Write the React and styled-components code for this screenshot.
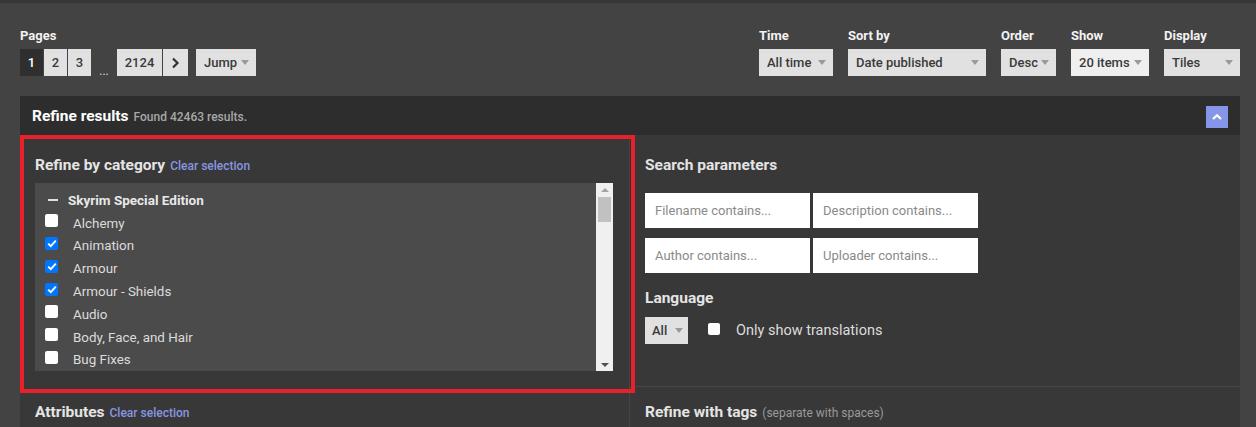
import React from "react";
import styled, { createGlobalStyle } from "styled-components";

const GlobalStyle = createGlobalStyle`
  html, body {
    margin: 0;
    padding: 0;
    background: #434343;
    font-family: Roboto, "Liberation Sans", Arial, sans-serif;
    overflow: hidden;
  }
  * { box-sizing: border-box; }
`;

const Page = styled.div`
  width: 1256px;
  height: 427px;
  background: #434343;
  border-top: 3px solid #363636;
  padding: 0 16px 0 20px;
`;

const Toolbar = styled.div`
  display: flex;
  justify-content: space-between;
  align-items: flex-end;
  height: 73px;
`;

const Group = styled.div`
  display: flex;
  flex-direction: column;
  gap: 5px;
`;

const Label = styled.div`
  color: #f2f2f2;
  font-size: 13px;
  font-weight: 700;
  height: 16px;
  line-height: 16px;
`;

const Row = styled.div`
  display: flex;
  align-items: flex-end;
`;

const PageBtn = styled.div`
  width: ${(p) => p.w}px;
  height: 27px;
  margin-right: ${(p) => p.mr ?? 1}px;
  background: ${(p) => (p.active ? "#2f2f2f" : "#e1e1e1")};
  color: ${(p) => (p.active ? "#fff" : "#3a3a3a")};
  font-size: 13px;
  font-weight: 500;
  display: flex;
  align-items: center;
  justify-content: center;
`;

const Dots = styled.div`
  width: 26px;
  text-align: center;
  color: #ddd;
  font-size: 12px;
  line-height: 10px;
`;

const RightTools = styled.div`
  display: flex;
  gap: 15px;
`;

const Select = styled.div`
  width: ${(p) => p.w}px;
  height: 27px;
  background: ${(p) => (p.light ? "#efefef" : "#e1e1e1")};
  color: #3a3a3a;
  font-size: 13px;
  font-weight: 500;
  display: flex;
  align-items: center;
  justify-content: space-between;
  padding: 0 7px 0 8px;
`;

const Caret = styled.span`
  width: 0;
  height: 0;
  border-left: 4px solid transparent;
  border-right: 4px solid transparent;
  border-top: 5px solid #9a9a9a;
`;

const Panel = styled.div`
  margin-top: 20px;
  width: 1220px;
  background: #383838;
`;

const PanelHead = styled.div`
  height: 39px;
  background: #2d2d2d;
  display: flex;
  align-items: center;
  justify-content: space-between;
  padding: 0 12px 0 12px;
`;

const HeadTitle = styled.div`
  display: flex;
  align-items: baseline;
  gap: 5px;
  color: #fff;
  font-size: 15.5px;
  font-weight: 700;
`;

const HeadNote = styled.span`
  color: #a8a8a8;
  font-size: 12px;
  font-weight: 500;
`;

const Collapse = styled.div`
  width: 22px;
  height: 22px;
  margin-top: 2px;
  background: #8596e8;
  display: flex;
  align-items: center;
  justify-content: center;
`;

const Grid = styled.div`
  display: grid;
  grid-template-columns: 610px 1fr;
  grid-template-rows: 252px 40px;
`;

const CategoryCell = styled.div`
  position: relative;
  border-right: 1px solid #454545;
  padding: 21px 16px 0 15px;
`;

/* the red highlight frame drawn over the category block */
const Highlight = styled.div`
  position: absolute;
  left: 0;
  top: 0;
  width: 615px;
  height: 258px;
  border: 4px solid #e8202a;
  pointer-events: none;
  z-index: 2;
`;

const ParamCell = styled.div`
  border-bottom: 1px solid #454545;
  border-left: 1px solid #2f2f2f;
  padding: 21px 10px 0 14px;
`;

const BottomCell = styled.div`
  padding-top: 16px;
  padding-left: ${(p) => (p.divider ? 15 : 15)}px;
  border-right: ${(p) => (p.divider ? "none" : "1px solid #454545")};
`;

const SectionTitle = styled.div`
  display: flex;
  align-items: baseline;
  gap: 5px;
  color: #e4e4e4;
  font-size: 15.5px;
  font-weight: 700;
  height: 18px;
  line-height: 18px;
`;

const ClearLink = styled.span`
  color: #8796e0;
  font-size: 12px;
  font-weight: 500;
`;

const Hint = styled.span`
  color: #9a9a9a;
  font-size: 12px;
  font-weight: 400;
`;

const ListBox = styled.div`
  margin-top: 9px;
  height: 188px;
  background: #4b4b4b;
  display: flex;
  justify-content: space-between;
  overflow: hidden;
`;

const List = styled.div`
  padding: 6px 0 0 10px;
`;

const Item = styled.div`
  height: 22.8px;
  display: flex;
  align-items: center;
  color: ${(p) => (p.head ? "#e8e8e8" : "#dcdcdc")};
  font-size: ${(p) => (p.head ? 13.5 : 13.4)}px;
  font-weight: ${(p) => (p.head ? 700 : 400)};
`;

const Dash = styled.span`
  width: 10px;
  height: 2px;
  background: #e0e0e0;
  margin: 0 10px 0 3px;
`;

const Box = styled.span`
  width: 13px;
  height: 13px;
  border-radius: 2px;
  background: ${(p) => (p.checked ? "#0075ff" : "#fff")};
  margin-right: 15px;
  margin-top: -5px;
  display: flex;
  align-items: center;
  justify-content: center;
`;

const Scrollbar = styled.div`
  width: 17px;
  height: 100%;
  background: #f0f0f0;
  display: flex;
  flex-direction: column;
  align-items: center;
  justify-content: space-between;
  padding: 5px 0 4px;
`;

const ScrollTrack = styled.div`
  flex: 1;
  width: 100%;
  padding: 5px 2px 0;
`;

const Thumb = styled.div`
  height: 25px;
  background: #c1c1c1;
`;

const Arrow = styled.span`
  width: 0;
  height: 0;
  border-left: 4px solid transparent;
  border-right: 4px solid transparent;
  ${(p) => (p.up ? "border-bottom: 4px solid #a3a3a3;" : "border-top: 4px solid #505050;")}
`;

const Inputs = styled.div`
  margin-top: 19px;
  display: grid;
  grid-template-columns: 165px 165px;
  gap: 10px 3px;
`;

const Input = styled.div`
  height: 35px;
  background: #fff;
  color: #8a8a8a;
  font-size: 13px;
  display: flex;
  align-items: center;
  padding-left: 10px;
`;

const LangTitle = styled(SectionTitle)`
  margin-top: 16px;
`;

const LangRow = styled.div`
  margin-top: 10px;
  display: flex;
  align-items: center;
`;

const SmallSelect = styled(Select)`
  padding: 0 5px 0 7px;
  gap: 4px;
`;

const Check = styled(Box)`
  margin: -4px 16px 0 20px;
  width: 12px;
  height: 12px;
`;

const CheckText = styled.span`
  color: #dcdcdc;
  font-size: 14.5px;
`;

const Tick = () => (
  <svg width="10" height="9" viewBox="0 0 10 9">
    <path d="M1.2 4.6 L3.8 7.2 L8.8 1.6" stroke="#fff" strokeWidth="1.9" fill="none" />
  </svg>
);

const categories = [
  ["Alchemy", false],
  ["Animation", true],
  ["Armour", true],
  ["Armour - Shields", true],
  ["Audio", false],
  ["Body, Face, and Hair", false],
  ["Bug Fixes", false],
];

export default function App() {
  return (
    <>
      <GlobalStyle />
      <Page>
        <Toolbar>
          <Group>
            <Label>Pages</Label>
            <Row>
              <PageBtn w={23} active>1</PageBtn>
              <PageBtn w={23}>2</PageBtn>
              <PageBtn w={23} mr={0}>3</PageBtn>
              <Dots>...</Dots>
              <PageBtn w={45}>2124</PageBtn>
              <PageBtn w={25} mr={8}>
                <svg width="9" height="12" viewBox="0 0 9 12">
                  <path d="M2 1.5 L6.5 6 L2 10.5" stroke="#333" strokeWidth="2.2" fill="none" />
                </svg>
              </PageBtn>
              <Select w={60}>
                Jump <Caret />
              </Select>
            </Row>
          </Group>
          <RightTools>
            <Group>
              <Label>Time</Label>
              <Select w={74}>All time <Caret /></Select>
            </Group>
            <Group>
              <Label>Sort by</Label>
              <Select w={138}>Date published <Caret /></Select>
            </Group>
            <Group>
              <Label>Order</Label>
              <Select w={55}>Desc <Caret /></Select>
            </Group>
            <Group>
              <Label>Show</Label>
              <Select w={78} light>20 items <Caret /></Select>
            </Group>
            <Group>
              <Label>Display</Label>
              <Select w={76}>Tiles <Caret /></Select>
            </Group>
          </RightTools>
        </Toolbar>

        <Panel>
          <PanelHead>
            <HeadTitle>
              Refine results <HeadNote>Found 42463 results.</HeadNote>
            </HeadTitle>
            <Collapse>
              <svg width="12" height="8" viewBox="0 0 12 8">
                <path d="M2 6 L6 2.2 L10 6" stroke="#fff" strokeWidth="2.2" fill="none" />
              </svg>
            </Collapse>
          </PanelHead>
          <Grid>
            <CategoryCell>
              <Highlight />
              <SectionTitle>
                Refine by category <ClearLink>Clear selection</ClearLink>
              </SectionTitle>
              <ListBox>
                <List>
                  <Item head>
                    <Dash />
                    Skyrim Special Edition
                  </Item>
                  {categories.map(([name, checked]) => (
                    <Item key={name}>
                      <Box checked={checked}>{checked && <Tick />}</Box>
                      {name}
                    </Item>
                  ))}
                </List>
                <Scrollbar>
                  <Arrow up />
                  <ScrollTrack>
                    <Thumb />
                  </ScrollTrack>
                  <Arrow />
                </Scrollbar>
              </ListBox>
            </CategoryCell>
            <ParamCell>
              <SectionTitle>Search parameters</SectionTitle>
              <Inputs>
                <Input>Filename contains...</Input>
                <Input>Description contains...</Input>
                <Input>Author contains...</Input>
                <Input>Uploader contains...</Input>
              </Inputs>
              <LangTitle>Language</LangTitle>
              <LangRow>
                <SmallSelect w={43}>All <Caret /></SmallSelect>
                <Check />
                <CheckText>Only show translations</CheckText>
              </LangRow>
            </ParamCell>
            <BottomCell>
              <SectionTitle>
                Attributes <ClearLink>Clear selection</ClearLink>
              </SectionTitle>
            </BottomCell>
            <BottomCell divider>
              <SectionTitle>
                Refine with tags <Hint>(separate with spaces)</Hint>
              </SectionTitle>
            </BottomCell>
          </Grid>
        </Panel>
      </Page>
    </>
  );
}
